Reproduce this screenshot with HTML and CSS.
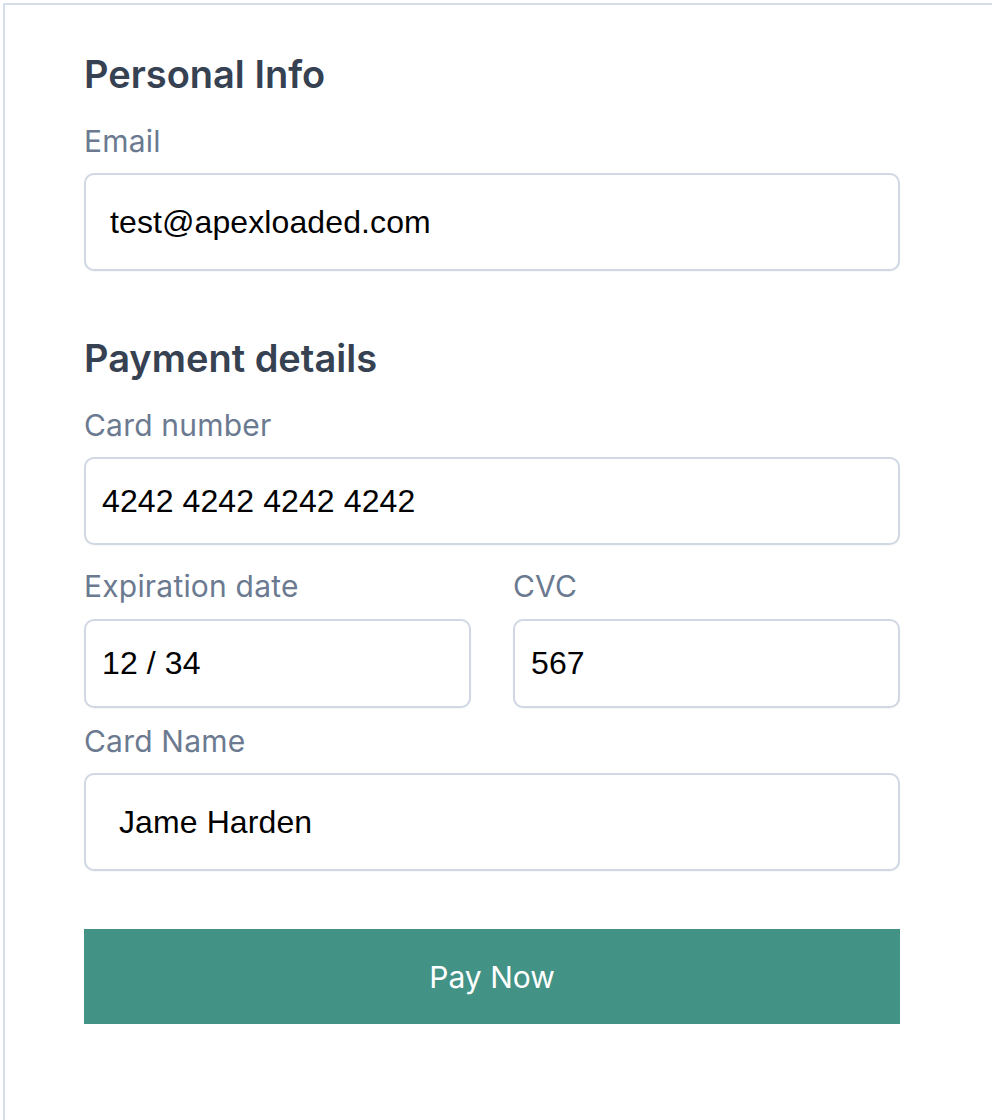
FILE: index.html
```html
<!DOCTYPE html>
<html lang="en">
<head>
<meta charset="utf-8">
<title>Checkout</title>
<link rel="stylesheet" href="styles.css">
</head>
<body>
<div class="frame">
  <form class="checkout">
    <h2 class="heading heading-first">Personal Info</h2>
    <label class="label" for="email">Email</label>
    <input class="field field-tall field-wide-pad" id="email" type="text" value="test@apexloaded.com">

    <h2 class="heading heading-second">Payment details</h2>
    <label class="label" for="card">Card number</label>
    <input class="field field-short" id="card" type="text" value="4242 4242 4242 4242">

    <div class="row">
      <div class="col">
        <label class="label" for="exp">Expiration date</label>
        <input class="field field-mid" id="exp" type="text" value="12 / 34">
      </div>
      <div class="col">
        <label class="label" for="cvc">CVC</label>
        <input class="field field-mid" id="cvc" type="text" value="567">
      </div>
    </div>

    <label class="label label-name" for="name">Card Name</label>
    <input class="field field-tall field-name-pad" id="name" type="text" value="Jame Harden">

    <button class="pay" type="button">Pay Now</button>
  </form>
</div>
</body>
</html>
```

FILE: styles.css
```css
html, body {
  margin: 0;
  padding: 0;
  background: #ffffff;
}

.frame {
  margin: 3px 0 0 3px;
  border-left: 2px solid #d6dee7;
  border-top: 2px solid #d6dee7;
  min-height: calc(100vh - 3px);
  box-sizing: border-box;
}

.checkout {
  width: 816px;
  padding-left: 79px;
  display: flex;
  flex-direction: column;
  font-family: Inter, "Noto Sans", sans-serif;
}

.heading {
  margin: 0;
  font-size: 38px;
  line-height: 46px;
  font-weight: 600;
  color: #364152;
}

.heading-first {
  margin-top: 46px;
}

.heading-second {
  margin-top: 64px;
}

.label {
  display: block;
  margin-top: 26px;
  font-size: 30px;
  line-height: 36px;
  letter-spacing: 0.2px;
  color: #6b7a90;
}

.label-name {
  margin-top: 15px;
}

.field {
  display: block;
  box-sizing: border-box;
  width: 100%;
  margin: 14px 0 0 0;
  border: 2px solid #cfd8e3;
  border-radius: 10px;
  background: #ffffff;
  font-family: "Liberation Sans", Arial, sans-serif;
  font-size: 32px;
  letter-spacing: 0.1px;
  color: #000000;
  padding: 0 16px;
  outline: none;
  box-shadow: 0 1px 2px rgba(0, 0, 0, 0.04);
}

.field-tall {
  height: 98px;
}

.field-short {
  height: 88px;
}

.field-mid {
  height: 89px;
  margin-top: 15px;
}

.field-wide-pad {
  padding-left: 24px;
}

.field-name-pad {
  padding-left: 33px;
}

.row {
  display: flex;
  gap: 42px;
  margin-top: 23px;
}

.row .label {
  margin-top: 0;
}

.col {
  flex: 1;
  display: flex;
  flex-direction: column;
}

.pay {
  margin-top: 58px;
  height: 95px;
  width: 100%;
  border: none;
  border-radius: 0;
  background: #439286;
  color: #ffffff;
  font-family: Inter, "Noto Sans", sans-serif;
  font-size: 30px;
  font-weight: 400;
  cursor: pointer;
}
```
